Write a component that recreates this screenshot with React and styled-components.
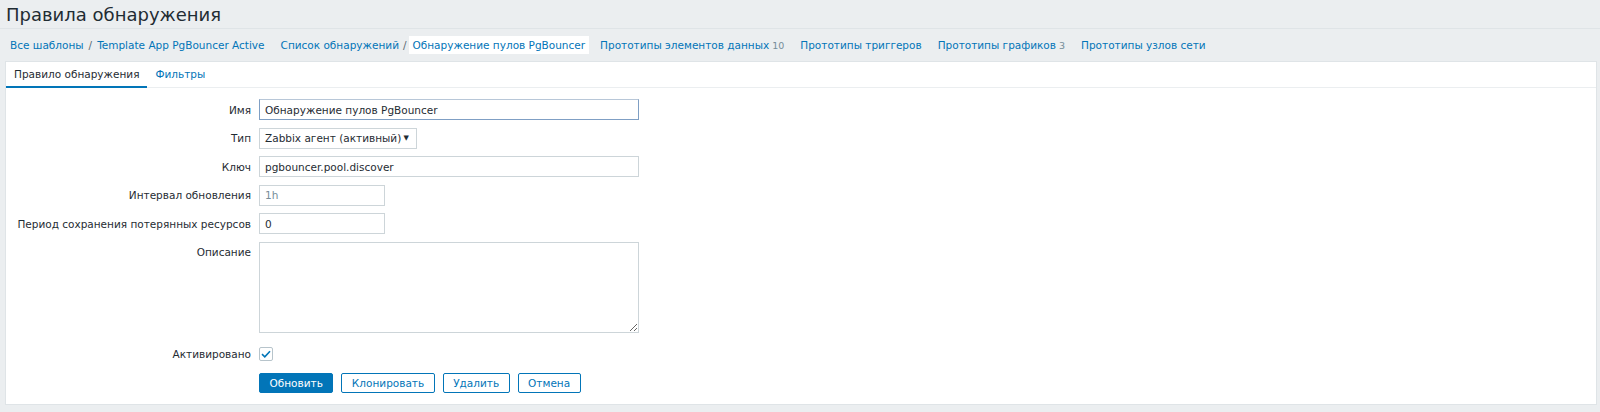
import React from 'react';
import styled, { createGlobalStyle } from 'styled-components';

const GlobalStyle = createGlobalStyle`
  html, body {
    margin: 0;
    padding: 0;
    background-color: #ebeef0;
  }
  body {
    font-family: "DejaVu Sans", "Noto Sans", sans-serif;
    font-size: 10.5px;
    color: #1f2c33;
  }
`;

const Page = styled.div`
  width: 1600px;
  height: 412px;
  overflow: hidden;
`;

const Header = styled.header`
  height: 28px;
  display: flex;
  align-items: center;
  padding-left: 6px;
  border-bottom: 1px solid #dfe4e7;
`;

const Title = styled.h1`
  margin: 0;
  font-size: 18px;
  font-weight: normal;
  color: #1f2c33;
`;

const Nav = styled.nav`
  height: 32px;
  display: flex;
  align-items: center;
  padding-left: 2px;
`;

const NavGroup = styled.div`
  display: flex;
  align-items: center;
  padding: ${(p) => (p.$flush ? '0 3px 0 8px' : '0 8px')};
`;

const NavLink = styled.span`
  color: #0275b8;
  white-space: nowrap;
  ${(p) =>
    p.$current &&
    `
    background: #ffffff;
    padding: 3px 4px 3px 4px;
  `}
`;

const Sep = styled.span`
  color: #5a6a73;
  margin: ${(p) => (p.$tight ? '0 2px 0 4px' : '0 5px')};
`;

const Count = styled.span`
  color: #768d99;
  font-size: 9.5px;
  margin-left: 3px;
`;

const Panel = styled.section`
  margin: 0 3px 0 5px;
  height: 344px;
  box-sizing: border-box;
  background: #ffffff;
  border: 1px solid #dfe4e7;
`;

const Tabs = styled.div`
  display: flex;
  height: 25px;
  border-bottom: 1px solid #ebeef0;
`;

const Tab = styled.div`
  display: flex;
  align-items: center;
  padding: 0 8px 0 8px;
  color: ${(p) => (p.$active ? '#1f2c33' : '#0275b8')};
  border-bottom: 2px solid ${(p) => (p.$active ? '#0275b8' : 'transparent')};
  margin-bottom: -1px;
`;

const Form = styled.div`
  display: flex;
  flex-direction: column;
  gap: 7.5px;
  padding-top: 11px;
`;

const Row = styled.div`
  display: grid;
  grid-template-columns: 245px auto;
  column-gap: 8px;
  align-items: ${(p) => (p.$top ? 'start' : 'center')};
  margin-top: ${(p) => p.$extra || 0}px;
`;

const Label = styled.label`
  text-align: right;
  color: #1f2c33;
  white-space: nowrap;
  padding-top: ${(p) => (p.$top ? '4px' : '0')};
`;

const TextInput = styled.input`
  box-sizing: border-box;
  width: ${(p) => p.$w}px;
  height: 21px;
  padding: 0 5px;
  font-family: inherit;
  font-size: 10.5px;
  color: ${(p) => (p.$muted ? '#768d99' : '#1f2c33')};
  background: #ffffff;
  border: 1px solid #cdd5d9;
  border-radius: 0;
  outline: none;
  ${(p) =>
    p.$focused &&
    `
    border-color: #7f9fc4;
    border-top-color: #b8c7d8;
  `}
`;

const Select = styled.div`
  box-sizing: border-box;
  width: 158px;
  height: 21px;
  display: flex;
  align-items: center;
  justify-content: space-between;
  padding: 0 7px 0 5px;
  border: 1px solid #cdd5d9;
  background: #ffffff;
  color: #1f2c33;
  white-space: nowrap;
`;

const Arrow = styled.span`
  font-size: 7px;
  color: #1f2c33;
`;

const TextArea = styled.textarea`
  box-sizing: border-box;
  width: 380px;
  height: 91px;
  padding: 3px 5px;
  font-family: inherit;
  font-size: 10.5px;
  border: 1px solid #cdd5d9;
  border-radius: 0;
  outline: none;
  display: block;
`;

const CheckBox = styled.span`
  box-sizing: border-box;
  width: 14px;
  height: 14px;
  display: flex;
  align-items: center;
  justify-content: center;
  border: 1px solid #b7c4cb;
  border-radius: 2px;
  background: #ffffff;
`;

const Buttons = styled.div`
  display: flex;
  gap: 8px;
`;

const Button = styled.button`
  box-sizing: border-box;
  height: 20px;
  padding: 0 9.5px;
  font-family: inherit;
  font-size: 10.5px;
  border-radius: 2px;
  border: 1px solid #0275b8;
  background: ${(p) => (p.$primary ? '#0275b8' : '#ffffff')};
  color: ${(p) => (p.$primary ? '#ffffff' : '#0275b8')};
  cursor: pointer;
`;

const Field = ({ label, children, top, extra }) => (
  <Row $top={top} $extra={extra}>
    <Label $top={top}>{label}</Label>
    <div>{children}</div>
  </Row>
);

export default function App() {
  return (
    <Page>
      <GlobalStyle />
      <Header>
        <Title>Правила обнаружения</Title>
      </Header>
      <Nav>
        <NavGroup>
          <NavLink>Все шаблоны</NavLink>
          <Sep>/</Sep>
          <NavLink>Template App PgBouncer Active</NavLink>
        </NavGroup>
        <NavGroup $flush>
          <NavLink>Список обнаружений</NavLink>
          <Sep $tight>/</Sep>
          <NavLink $current>Обнаружение пулов PgBouncer</NavLink>
        </NavGroup>
        <NavGroup>
          <NavLink>Прототипы элементов данных</NavLink>
          <Count>10</Count>
        </NavGroup>
        <NavGroup>
          <NavLink>Прототипы триггеров</NavLink>
        </NavGroup>
        <NavGroup>
          <NavLink>Прототипы графиков</NavLink>
          <Count>3</Count>
        </NavGroup>
        <NavGroup>
          <NavLink>Прототипы узлов сети</NavLink>
        </NavGroup>
      </Nav>
      <Panel>
        <Tabs>
          <Tab $active>Правило обнаружения</Tab>
          <Tab>Фильтры</Tab>
        </Tabs>
        <Form>
          <Field label="Имя">
            <TextInput $w={380} $focused readOnly value="Обнаружение пулов PgBouncer" />
          </Field>
          <Field label="Тип">
            <Select>
              <span>Zabbix агент (активный)</span>
              <Arrow>▼</Arrow>
            </Select>
          </Field>
          <Field label="Ключ">
            <TextInput $w={380} readOnly value="pgbouncer.pool.discover" />
          </Field>
          <Field label="Интервал обновления">
            <TextInput $w={126} $muted readOnly value="1h" />
          </Field>
          <Field label="Период сохранения потерянных ресурсов">
            <TextInput $w={126} readOnly value="0" />
          </Field>
          <Field label="Описание" top>
            <TextArea readOnly value="" />
          </Field>
          <Field label="Активировано" extra={7}>
            <CheckBox>
              <svg width="10" height="8" viewBox="0 0 10 8">
                <path d="M1 4.2 L3.8 6.8 L9 1.2" fill="none" stroke="#0275b8" strokeWidth="1.6" />
              </svg>
            </CheckBox>
          </Field>
          <Field label="" extra={4}>
            <Buttons>
              <Button $primary>Обновить</Button>
              <Button>Клонировать</Button>
              <Button>Удалить</Button>
              <Button>Отмена</Button>
            </Buttons>
          </Field>
        </Form>
      </Panel>
    </Page>
  );
}
